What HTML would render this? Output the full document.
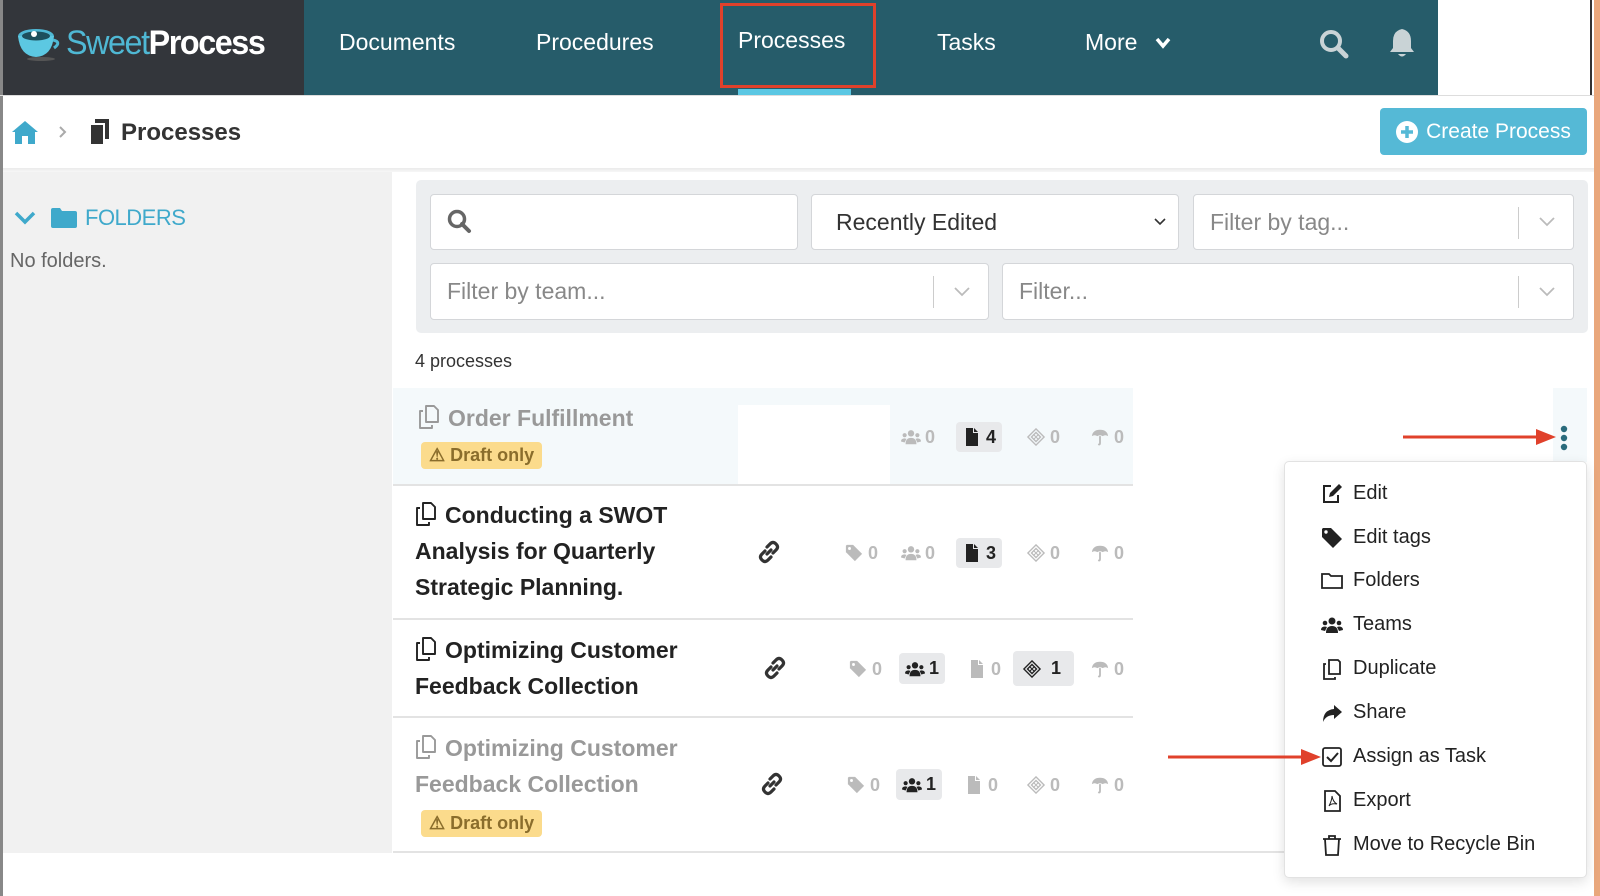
<!DOCTYPE html>
<html><head><meta charset="utf-8"><style>
*{box-sizing:border-box;margin:0;padding:0}
body{width:1600px;height:896px;overflow:hidden;background:#fff;font-family:"Liberation Sans",sans-serif;position:relative;color:#222}
.a{position:absolute}
.nav{left:0;top:0;width:1438px;height:95px;background:#265c6a}
.logo{left:0;top:0;width:304px;height:95px;background:#33363b}
.ni{color:#fff;font-size:23px;top:29px}
.pill{position:absolute;height:30px;border-radius:4px;font-size:18px;color:#bbb;display:flex;align-items:center;gap:4px;padding:0 6px;font-weight:bold}
.pill.on{background:#e8e9eb;color:#222}
.pill svg{width:20px;height:18px}
.inp{position:absolute;background:#fff;border:1px solid #d4d6d9;border-radius:4px;font-size:23px;color:#888;display:flex;align-items:center;padding-left:16px}
.menu div{position:absolute;left:36px;font-size:20px;color:#222;display:flex;align-items:center;gap:10px}
.menu svg{width:22px;height:22px}
.t{font-size:23px;font-weight:bold;line-height:36px}
.doc{display:inline-block;vertical-align:-3px;margin-right:8px}
</style></head><body>
<svg width="0" height="0" style="position:absolute"><defs>
<symbol id="d" viewBox="0 0 22 24"><path d="M8 1H16L20 5V17H8Z M5 6H2V23H14V20" stroke="currentColor" stroke-width="1.9" fill="none" stroke-linejoin="round"/></symbol>
<symbol id="l" viewBox="0 0 26 26"><g stroke="currentColor" stroke-width="3.2" fill="none" stroke-linecap="round"><path d="M11 15L15 11"/><path d="M9 12L6 15Q3 18 6 21Q9 24 12 21L15 18"/><path d="M17 14L20 11Q23 8 20 5Q17 2 14 5L11 8"/></g></symbol>
<symbol id="u" viewBox="0 0 22 18"><circle cx="11" cy="5" r="3.5" fill="currentColor"/><circle cx="4" cy="7" r="2.3" fill="currentColor"/><circle cx="18" cy="7" r="2.3" fill="currentColor"/><path d="M5 17Q5 10 11 10Q17 10 17 17Z M0 14Q0 10.5 4 10.5L6 11L4 15Z M22 14Q22 10.5 18 10.5L16 11L18 15Z" fill="currentColor"/></symbol>
<symbol id="f" viewBox="0 0 20 18"><path d="M4 0H11V5H16V18H4Z M12 0L16 4H12Z" fill="currentColor"/></symbol>
<symbol id="k" viewBox="0 0 20 20"><path d="M10 1L19 10L10 19L1 10Z M10 5L15 10L10 15L5 10Z" stroke="currentColor" stroke-width="1.5" fill="none"/><path d="M7 7L13 13M13 7L7 13" stroke="currentColor" stroke-width="1.2"/></symbol>
<symbol id="m" viewBox="0 0 20 20"><path d="M1 9Q2 2 10 2Q18 2 19 9Q16 7 13 9Q10 7 7 9Q4 7 1 9Z" fill="currentColor"/><path d="M10 9V17Q10 19 8 18" stroke="currentColor" stroke-width="2" fill="none"/></symbol>
<symbol id="g" viewBox="0 0 20 20"><path d="M1 2V9L11 19L19 11L9 1H2Z" fill="currentColor"/><circle cx="5" cy="5" r="1.6" fill="#fff"/></symbol>
</defs></svg>
<div class="a nav"></div>
<div class="a logo"></div>
<svg class="a" style="left:16px;top:26px" width="46" height="36" viewBox="0 0 46 36"><ellipse cx="20" cy="10" rx="18" ry="7" fill="#4fb8d4"/><path d="M2 10 Q4 30 20 31 Q36 30 38 10Z" fill="#5cc8e2"/><ellipse cx="20" cy="10" rx="14" ry="4.5" fill="#1d4f5c"/><circle cx="18" cy="8" r="3" fill="#fff"/><path d="M37 14 Q46 16 38 22" stroke="#4fb8d4" stroke-width="3" fill="none"/><ellipse cx="25" cy="33" rx="14" ry="2" fill="#555"/></svg>
<div class="a" style="left:66px;top:24px;font-size:34px;letter-spacing:-1.5px;transform:scaleX(.95);transform-origin:left"><span style="color:#4fb8d4">Sweet</span><span style="color:#fff;font-weight:bold">Process</span></div>
<div class="a ni" style="left:339px">Documents</div>
<div class="a ni" style="left:536px">Procedures</div>
<div class="a" style="left:720px;top:3px;width:156px;height:85px;border:3px solid #e0412b"></div>
<div class="a ni" style="left:738px;top:27px">Processes</div>
<div class="a" style="left:738px;top:89px;width:113px;height:6px;background:#5bc7e3"></div>
<div class="a ni" style="left:937px">Tasks</div>
<div class="a ni" style="left:1085px">More</div>
<svg class="a" style="left:1155px;top:37px" width="16" height="12" viewBox="0 0 16 12"><path d="M2 2L8 9L14 2" stroke="#fff" stroke-width="3.5" fill="none"/></svg>
<svg class="a" style="left:1318px;top:28px" width="32" height="32" viewBox="0 0 32 32"><circle cx="13" cy="13" r="9" stroke="#c9d3d6" stroke-width="4" fill="none"/><path d="M20 20 L28 28" stroke="#c9d3d6" stroke-width="5" stroke-linecap="round"/></svg>
<svg class="a" style="left:1388px;top:27px" width="28" height="32" viewBox="0 0 28 32"><path d="M14 2 Q5 4 5 14 L5 21 L2 25 L26 25 L23 21 L23 14 Q23 4 14 2Z M10 27 Q14 32 18 27Z" fill="#c9d3d6"/></svg>
<div class="a" style="left:1590px;top:0;width:2px;height:95px;background:#333"></div>
<div class="a" style="left:1594px;top:0;width:6px;height:896px;background:#e9a77c"></div>
<div class="a" style="left:0;top:0;width:3px;height:896px;background:#888"></div>
<div class="a" style="left:0;top:95px;width:1594px;height:1px;background:#ddd"></div>
<svg class="a" style="left:11px;top:119px" width="28" height="26" viewBox="0 0 28 26"><path d="M14 2 L1 13 L4 13 L4 25 L11 25 L11 17 L17 17 L17 25 L24 25 L24 13 L27 13Z" fill="#3fa9cb"/></svg>
<svg class="a" style="left:58px;top:125px" width="10" height="14" viewBox="0 0 10 14"><path d="M2 2L7 7L2 12" stroke="#aaa" stroke-width="2" fill="none"/></svg>
<svg class="a" style="left:89px;top:118px" width="22" height="28" viewBox="0 0 22 28"><rect x="6" y="1" width="14" height="20" fill="#333"/><rect x="1" y="6" width="14" height="21" fill="#333" stroke="#fff" stroke-width="2"/></svg>
<div class="a" style="left:121px;top:119px;font-size:24px;font-weight:bold;color:#333">Processes</div>
<div class="a" style="left:1380px;top:108px;width:207px;height:47px;background:#55b9d6;border-radius:4px;color:#fff;font-size:21px;display:flex;align-items:center;justify-content:center;gap:8px"><svg width="22" height="22" viewBox="0 0 22 22"><circle cx="11" cy="11" r="11" fill="#fff"/><path d="M11 5V17M5 11H17" stroke="#55b9d6" stroke-width="3.5"/></svg>Create Process</div>
<div class="a" style="left:3px;top:168px;width:389px;height:685px;background:#f1f1f1"></div>
<div class="a" style="left:3px;top:168px;width:1591px;height:4px;background:linear-gradient(#eaeaea,#f7f7f7)"></div>
<svg class="a" style="left:14px;top:211px" width="22" height="14" viewBox="0 0 22 14"><path d="M2 2L11 11L20 2" stroke="#3fa9cb" stroke-width="3.5" fill="none"/></svg>
<svg class="a" style="left:51px;top:208px" width="26" height="20" viewBox="0 0 26 20"><path d="M0 2 Q0 0 2 0 L9 0 L11 3 L24 3 Q26 3 26 5 L26 18 Q26 20 24 20 L2 20 Q0 20 0 18Z" fill="#3fa9cb"/></svg>
<div class="a" style="left:85px;top:205px;color:#3fa9cb;font-size:22px;letter-spacing:-.5px">FOLDERS</div>
<div class="a" style="left:10px;top:250px;color:#666;font-size:20px">No folders.</div>
<div class="a" style="left:416px;top:180px;width:1172px;height:153px;background:#eceef0;border-radius:5px"></div>
<div class="inp" style="left:430px;top:194px;width:368px;height:56px"><svg width="26" height="26" viewBox="0 0 26 26"><circle cx="10" cy="10" r="7.5" stroke="#666" stroke-width="3.5" fill="none"/><path d="M15 15L22 22" stroke="#666" stroke-width="4" stroke-linecap="round"/></svg></div>
<div class="inp" style="left:811px;top:194px;width:368px;height:56px;color:#333;padding-left:24px">Recently Edited<svg style="position:absolute;right:12px" width="12" height="8" viewBox="0 0 12 8"><path d="M1 1L6 6L11 1" stroke="#333" stroke-width="1.6" fill="none"/></svg></div>
<div class="inp" style="left:1193px;top:194px;width:381px;height:56px">Filter by tag...<span style="position:absolute;right:54px;top:12px;width:1px;height:32px;background:#ccc"></span><svg style="position:absolute;right:18px" width="16" height="10" viewBox="0 0 16 10"><path d="M1 1L8 8L15 1" stroke="#bbb" stroke-width="1.8" fill="none"/></svg></div>
<div class="inp" style="left:430px;top:263px;width:559px;height:57px">Filter by team...<span style="position:absolute;right:54px;top:12px;width:1px;height:32px;background:#ccc"></span><svg style="position:absolute;right:18px" width="16" height="10" viewBox="0 0 16 10"><path d="M1 1L8 8L15 1" stroke="#bbb" stroke-width="1.8" fill="none"/></svg></div>
<div class="inp" style="left:1002px;top:263px;width:572px;height:57px">Filter...<span style="position:absolute;right:54px;top:12px;width:1px;height:32px;background:#ccc"></span><svg style="position:absolute;right:18px" width="16" height="10" viewBox="0 0 16 10"><path d="M1 1L8 8L15 1" stroke="#bbb" stroke-width="1.8" fill="none"/></svg></div>
<div class="a" style="left:415px;top:351px;font-size:18px;color:#333">4 processes</div>
<div class="a" style="left:393px;top:388px;width:740px;height:96px;background:#f4f9fb"></div>
<div class="a" style="left:738px;top:405px;width:152px;height:82px;background:#fff"></div>
<div class="a" style="left:1553px;top:388px;width:34px;height:74px;background:#f4f9fb"></div>
<div class="a" style="left:393px;top:484px;width:740px;height:2px;background:#e3e3e3"></div>
<div class="a" style="left:393px;top:618px;width:740px;height:2px;background:#e3e3e3"></div>
<div class="a" style="left:393px;top:716px;width:740px;height:2px;background:#e3e3e3"></div>
<div class="a" style="left:393px;top:851px;width:1000px;height:2px;background:#e3e3e3"></div>
<div class="a t" style="left:418px;top:400px;color:#999"><svg class="doc" width="22" height="24"><use href="#d"/></svg>Order Fulfillment</div>
<div class="a" style="left:421px;top:442px;background:#fbdb8c;color:#8a6d2c;font-weight:bold;font-size:18px;padding:3px 8px;border-radius:4px">&#9888; Draft only</div>
<div class="a t" style="left:415px;top:497px;width:300px"><svg class="doc" width="22" height="24"><use href="#d"/></svg>Conducting a SWOT Analysis for Quarterly Strategic Planning.</div>
<div class="a t" style="left:415px;top:632px;width:310px"><svg class="doc" width="22" height="24"><use href="#d"/></svg>Optimizing Customer Feedback Collection</div>
<div class="a t" style="left:415px;top:730px;width:310px;color:#999"><svg class="doc" width="22" height="24"><use href="#d"/></svg>Optimizing Customer Feedback Collection</div>
<div class="a" style="left:421px;top:810px;background:#fbdb8c;color:#8a6d2c;font-weight:bold;font-size:18px;padding:3px 8px;border-radius:4px">&#9888; Draft only</div>
<svg class="a" style="left:756px;top:539px;color:#333" width="26" height="26"><use href="#l"/></svg>
<svg class="a" style="left:762px;top:655px;color:#333" width="26" height="26"><use href="#l"/></svg>
<svg class="a" style="left:759px;top:771px;color:#333" width="26" height="26"><use href="#l"/></svg>
<div class="pill" style="left:895px;top:422px"><svg><use href="#u"/></svg>0</div>
<div class="pill on" style="left:956px;top:422px"><svg><use href="#f"/></svg>4</div>
<div class="pill" style="left:1020px;top:422px"><svg><use href="#k"/></svg> 0</div>
<div class="pill" style="left:1084px;top:422px"><svg><use href="#m"/></svg>0</div>
<div class="pill" style="left:838px;top:538px"><svg><use href="#g"/></svg>0</div>
<div class="pill" style="left:895px;top:538px"><svg><use href="#u"/></svg>0</div>
<div class="pill on" style="left:956px;top:538px"><svg><use href="#f"/></svg>3</div>
<div class="pill" style="left:1020px;top:538px"><svg><use href="#k"/></svg> 0</div>
<div class="pill" style="left:1084px;top:538px"><svg><use href="#m"/></svg>0</div>
<div class="pill" style="left:842px;top:654px"><svg><use href="#g"/></svg>0</div>
<div class="pill on" style="left:899px;top:653px;height:31px"><svg><use href="#u"/></svg>1</div>
<div class="pill" style="left:961px;top:654px"><svg><use href="#f"/></svg>0</div>
<div class="pill on" style="left:1013px;top:651px;height:35px;width:61px;padding-left:9px"><svg><use href="#k"/></svg>&nbsp;1</div>
<div class="pill" style="left:1084px;top:654px"><svg><use href="#m"/></svg>0</div>
<div class="pill" style="left:840px;top:770px"><svg><use href="#g"/></svg>0</div>
<div class="pill on" style="left:896px;top:769px;height:31px"><svg><use href="#u"/></svg>1</div>
<div class="pill" style="left:958px;top:770px"><svg><use href="#f"/></svg>0</div>
<div class="pill" style="left:1020px;top:770px"><svg><use href="#k"/></svg> 0</div>
<div class="pill" style="left:1084px;top:770px"><svg><use href="#m"/></svg>0</div>
<svg class="a" style="left:1559px;top:425px" width="10" height="26" viewBox="0 0 10 26"><circle cx="5" cy="4" r="3.2" fill="#2a6b7c"/><circle cx="5" cy="13" r="3.2" fill="#2a6b7c"/><circle cx="5" cy="22" r="3.2" fill="#2a6b7c"/></svg>
<svg class="a" style="left:1400px;top:425px" width="160" height="24"><path d="M3 12H138" stroke="#e0412b" stroke-width="3"/><path d="M136 4L156 12L136 20Z" fill="#e0412b"/></svg>
<div class="a menu" style="left:1284px;top:461px;width:303px;height:417px;background:#fff;border:1px solid #e2e2e2;border-radius:5px;box-shadow:0 4px 12px rgba(0,0,0,.12)">
<div style="top:20px"><svg viewBox="0 0 22 22"><path d="M10 3H3V19H17V12" stroke="#222" stroke-width="2" fill="none"/><path d="M8 14L9 10L18 1L21 4L12 13Z" fill="#222"/></svg>Edit</div>
<div style="top:64px"><svg viewBox="0 0 22 22"><path d="M1 2V10L12 21L21 12L10 1H2Z" fill="#222"/><circle cx="5" cy="5" r="1.7" fill="#fff"/></svg>Edit tags</div>
<div style="top:107px"><svg viewBox="0 0 22 22"><path d="M1 4H8L10 6H21V18H1Z" stroke="#222" stroke-width="1.8" fill="none"/></svg>Folders</div>
<div style="top:151px"><svg viewBox="0 0 22 18"><use href="#u"/></svg>Teams</div>
<div style="top:195px"><svg viewBox="0 0 22 22"><path d="M8 2H17L19 4V16H8Z M5 6H3V21H14V19" stroke="#222" stroke-width="1.8" fill="none"/></svg>Duplicate</div>
<div style="top:239px"><svg viewBox="0 0 22 22"><path d="M13 3L21 10L13 17V13Q5 13 2 20Q2 8 13 7Z" fill="#222"/></svg>Share</div>
<div style="top:283px"><svg viewBox="0 0 22 22"><rect x="2" y="2" width="18" height="18" rx="2" stroke="#222" stroke-width="1.8" fill="none"/><path d="M6 11L10 15L17 7" stroke="#222" stroke-width="2" fill="none"/></svg>Assign as Task</div>
<div style="top:327px"><svg viewBox="0 0 22 22"><path d="M4 1H14L19 6V21H4Z" stroke="#222" stroke-width="1.8" fill="none"/><path d="M8 16Q11 10 11 6Q12 12 16 14Q10 13 8 16" stroke="#222" stroke-width="1" fill="none"/></svg>Export</div>
<div style="top:371px"><svg viewBox="0 0 22 22"><path d="M2 5H20M8 5V2H14V5M4 5L5 21H17L18 5" stroke="#222" stroke-width="1.8" fill="none"/></svg>Move to Recycle Bin</div>
</div>
<svg class="a" style="left:1165px;top:745px" width="160" height="24"><path d="M3 12H138" stroke="#e0412b" stroke-width="3"/><path d="M136 4L156 12L136 20Z" fill="#e0412b"/></svg>
</body></html>
